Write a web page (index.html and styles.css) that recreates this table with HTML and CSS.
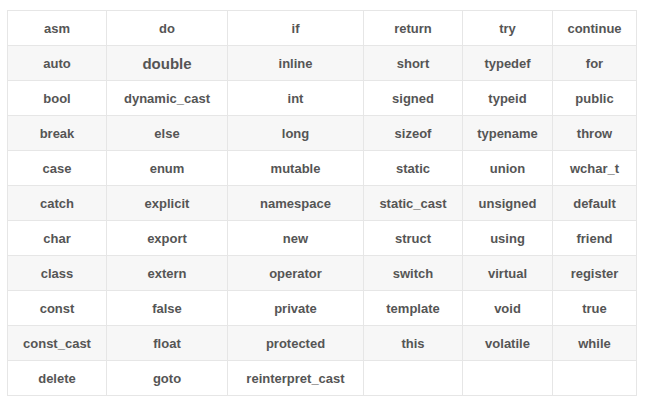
FILE: index.html
```html
<!DOCTYPE html>
<html>
<head>
<meta charset="utf-8">
<link rel="stylesheet" href="styles.css">
</head>
<body>
<table class="kw">
<colgroup>
<col class="c1"><col class="c2"><col class="c3"><col class="c4"><col class="c5"><col class="c6">
</colgroup>
<tbody>
<tr><td>asm</td><td>do</td><td>if</td><td>return</td><td>try</td><td>continue</td></tr>
<tr><td>auto</td><td class="big">double</td><td>inline</td><td>short</td><td>typedef</td><td>for</td></tr>
<tr><td>bool</td><td>dynamic_cast</td><td>int</td><td>signed</td><td>typeid</td><td>public</td></tr>
<tr><td>break</td><td>else</td><td>long</td><td>sizeof</td><td>typename</td><td>throw</td></tr>
<tr><td>case</td><td>enum</td><td>mutable</td><td>static</td><td>union</td><td>wchar_t</td></tr>
<tr><td>catch</td><td>explicit</td><td>namespace</td><td>static_cast</td><td>unsigned</td><td>default</td></tr>
<tr><td>char</td><td>export</td><td>new</td><td>struct</td><td>using</td><td>friend</td></tr>
<tr><td>class</td><td>extern</td><td>operator</td><td>switch</td><td>virtual</td><td>register</td></tr>
<tr><td>const</td><td>false</td><td>private</td><td>template</td><td>void</td><td>true</td></tr>
<tr><td>const_cast</td><td>float</td><td>protected</td><td>this</td><td>volatile</td><td>while</td></tr>
<tr><td>delete</td><td>goto</td><td>reinterpret_cast</td><td></td><td></td><td></td></tr>
</tbody>
</table>
</body>
</html>
```
FILE: styles.css
```css
html, body {
  margin: 0;
  background: #fff;
}
body {
  padding: 10px 0 0 7px;
  font-family: "Liberation Sans", Arial, sans-serif;
}
.kw {
  border-collapse: collapse;
  table-layout: fixed;
  width: 629px;
}
.c1 { width: 99px; }
.c2 { width: 121px; }
.c3 { width: 136px; }
.c4 { width: 99px; }
.c5 { width: 90px; }
.c6 { width: 84px; }
.kw td {
  border: 1px solid #e6e6e6;
  height: 34px;
  padding: 0;
  text-align: center;
  vertical-align: middle;
  font-size: 13px;
  font-weight: bold;
  color: #555;
}
.kw tr:nth-child(even) td {
  background: #f7f7f7;
}
.kw td.big {
  font-size: 15px;
}
```
